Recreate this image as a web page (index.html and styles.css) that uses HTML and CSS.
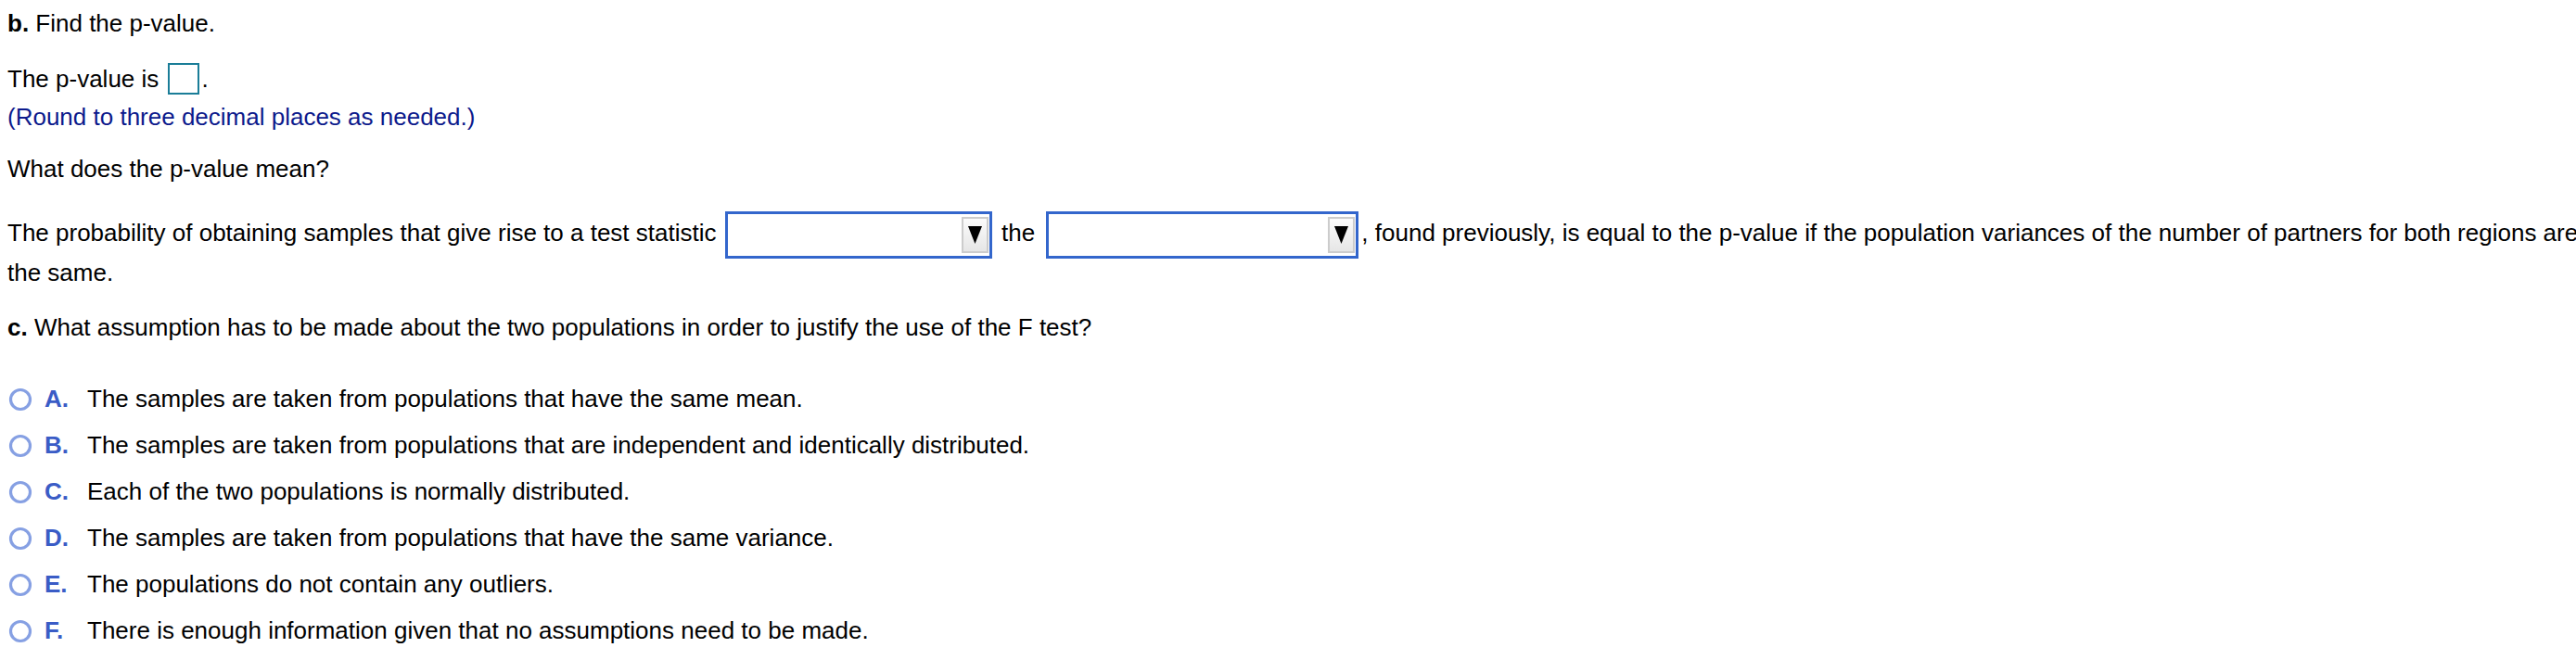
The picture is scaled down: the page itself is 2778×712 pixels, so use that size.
FILE: index.html
```html
<!DOCTYPE html>
<html lang="en">
<head>
<meta charset="utf-8">
<title>Find the p-value</title>
<link rel="stylesheet" href="styles.css">
</head>
<body>
<div class="page">
  <p class="line title"><b>b.</b> Find the p-value.</p>

  <p class="pv-row">The p-value is <span class="answer-box"></span>.</p>
  <p class="line hint">(Round to three decimal places as needed.)</p>

  <p class="line meaning">What does the p-value mean?</p>

  <p class="para">The probability of obtaining samples that give rise to a test statistic <span class="dropdown dd1"><span class="dd-btn"><svg class="tri" viewBox="0 0 15 19" width="15" height="19"><polygon points="0,0 15,0 7.5,19" /></svg></span></span> the <span class="dropdown dd2"><span class="dd-btn"><svg class="tri" viewBox="0 0 15 19" width="15" height="19"><polygon points="0,0 15,0 7.5,19" /></svg></span></span>, found previously, is equal to the p-value if the population variances of the number of partners for both regions are the same.</p>

  <p class="line question"><b>c.</b> What assumption has to be made about the two populations in order to justify the use of the F test?</p>

  <ul class="options">
    <li class="option"><svg class="radio" viewBox="0 0 26 26" width="26" height="26"><circle cx="13" cy="13" r="10.5" /></svg><span class="letter">A.</span><span class="opt-text">The samples are taken from populations that have the same mean.</span></li>
    <li class="option"><svg class="radio" viewBox="0 0 26 26" width="26" height="26"><circle cx="13" cy="13" r="10.5" /></svg><span class="letter">B.</span><span class="opt-text">The samples are taken from populations that are independent and identically distributed.</span></li>
    <li class="option"><svg class="radio" viewBox="0 0 26 26" width="26" height="26"><circle cx="13" cy="13" r="10.5" /></svg><span class="letter">C.</span><span class="opt-text">Each of the two populations is normally distributed.</span></li>
    <li class="option"><svg class="radio" viewBox="0 0 26 26" width="26" height="26"><circle cx="13" cy="13" r="10.5" /></svg><span class="letter">D.</span><span class="opt-text">The samples are taken from populations that have the same variance.</span></li>
    <li class="option"><svg class="radio" viewBox="0 0 26 26" width="26" height="26"><circle cx="13" cy="13" r="10.5" /></svg><span class="letter">E.</span><span class="opt-text">The populations do not contain any outliers.</span></li>
    <li class="option"><svg class="radio" viewBox="0 0 26 26" width="26" height="26"><circle cx="13" cy="13" r="10.5" /></svg><span class="letter">F.</span><span class="opt-text">There is enough information given that no assumptions need to be made.</span></li>
  </ul>
</div>
</body>
</html>
```

FILE: styles.css
```css
html, body {
  margin: 0;
  padding: 0;
  background: #ffffff;
  overflow: hidden;
}

body {
  font-family: "Liberation Sans", Arial, sans-serif;
  font-size: 26px;
  color: #000000;
}

.page {
  padding: 10px 0 0 8px;
}

.line {
  margin: 0;
  line-height: 30px;
  white-space: nowrap;
}

.pv-row {
  margin: 28px 0 0 0;
  height: 34px;
  display: flex;
  align-items: center;
  white-space: pre;
}

.answer-box {
  display: inline-block;
  box-sizing: border-box;
  width: 34px;
  height: 34px;
  border: 2px solid #1a7d98;
  margin: 0 3px 0 2px;
}

.hint {
  margin-top: 9px;
  color: #0c1a8c;
}

.meaning {
  margin-top: 26px;
}

.para {
  margin: 34px 0 0 0;
  width: 2800px;
  line-height: 41px;
}

.dropdown {
  display: inline-flex;
  justify-content: flex-end;
  align-items: center;
  box-sizing: border-box;
  height: 51px;
  margin: -5px 3px -5px 2px;
  vertical-align: middle;
  border: 3px solid #3366cc;
  background: #ffffff;
  padding: 0 1px 0 0;
}

.dd1 {
  width: 288px;
}

.dd2 {
  width: 337px;
  margin-left: 5px;
}

.dd-btn {
  display: flex;
  align-items: center;
  justify-content: center;
  box-sizing: border-box;
  width: 29px;
  height: 39px;
  border: 2px solid #cccccc;
  background: linear-gradient(#fbfbfb, #e6e6e6);
}

.tri polygon {
  fill: #000000;
}

.question {
  margin-top: 23px;
}

.options {
  list-style: none;
  margin: 38px 0 0 0;
  padding: 0;
  display: flex;
  flex-direction: column;
}

.option {
  display: flex;
  align-items: center;
  height: 50px;
  white-space: nowrap;
}

.radio {
  margin-left: 1px;
  flex: none;
}

.radio circle {
  fill: #ffffff;
  stroke: #86a0e3;
  stroke-width: 3.2;
}

.letter {
  color: #3a5cc6;
  font-weight: bold;
  margin-left: 13px;
  width: 46px;
}

.opt-text {
  color: #000;
}
```
